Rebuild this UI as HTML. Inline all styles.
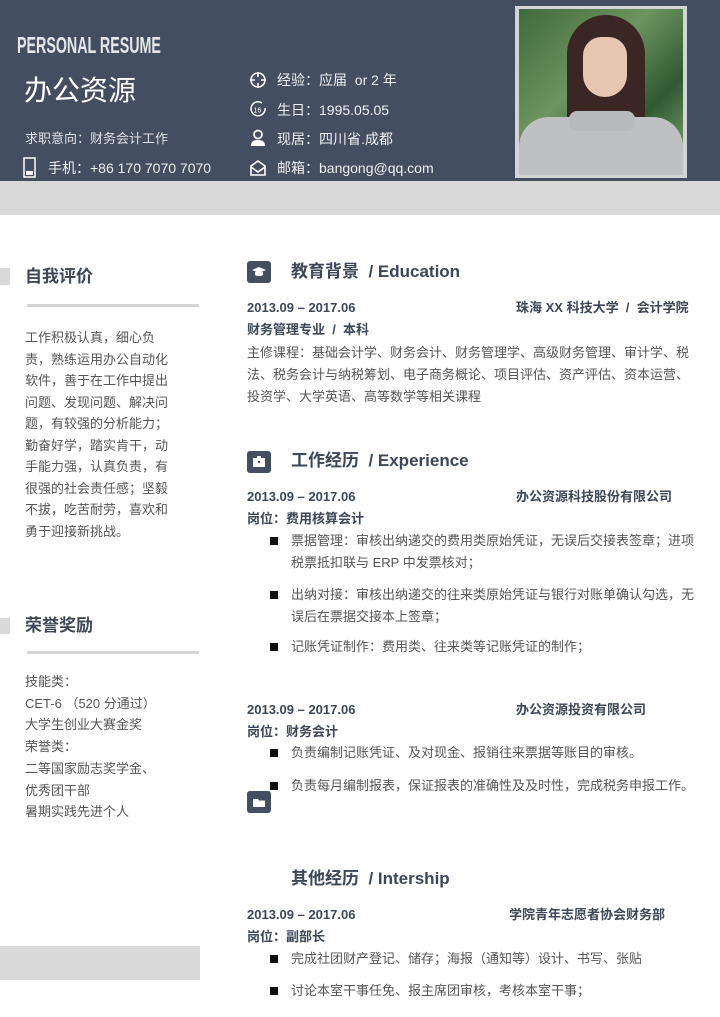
<!DOCTYPE html>
<html><head><meta charset="utf-8">
<style>
*{margin:0;padding:0;box-sizing:border-box}
body{width:720px;height:1017px;position:relative;overflow:hidden;background:#fff;font-family:"Liberation Sans","Noto Sans CJK SC",sans-serif;color:#555}
.a{position:absolute;white-space:nowrap;line-height:1}
.w{color:#eef0f3}
.h{font-size:17px;font-weight:bold;color:#3d4757}
.d{font-size:13px;font-weight:bold;color:#3d4757}
.t{font-size:13px;color:#555}
.ic{position:absolute;width:24px;height:22px;background:#434f60;border-radius:3px}
.b{position:absolute;width:8px;height:8px;background:#111}
</style></head><body>
<div class="a" style="left:0;top:0;width:720px;height:181px;background:#434f60"></div>
<div class="a" style="left:0;top:181px;width:720px;height:34px;background:#d9d9d9"></div>
<div class="a w" style="left:17px;top:34px;font-family:'Liberation Sans Narrow','Liberation Sans',sans-serif;font-weight:bold;font-size:23px;transform:scaleX(0.62);transform-origin:left;color:#e4e6ea">PERSONAL RESUME</div>
<div class="a w" style="left:24px;top:77px;font-size:28px;color:#fff">办公资源</div>
<div class="a w" style="left:25px;top:132px;font-size:13px;color:#dfe2e6">求职意向：财务会计工作</div>
<svg class="a" style="left:23px;top:157px" width="14" height="21" viewBox="0 0 14 21"><rect x="1" y="1" width="11" height="19" fill="none" stroke="#fff" stroke-width="1.5"/><rect x="3" y="14" width="7" height="4" fill="#fff"/></svg>
<div class="a w" style="left:48px;top:161px;font-size:14px">手机：+86 170 7070 7070</div>
<svg class="a" style="left:249px;top:71px" width="18" height="18" viewBox="0 0 18 18" fill="none" stroke="#fff" stroke-width="1.6"><circle cx="9" cy="9" r="7"/><path d="M9 1v5M9 12v5M1 9h5M12 9h5"/></svg>
<svg class="a" style="left:249px;top:100px" width="18" height="18" viewBox="0 0 18 18" fill="none" stroke="#fff" stroke-width="1.5"><path d="M13 3A7 7 0 1 0 16 8"/><text x="4.5" y="12.5" font-size="7" fill="#fff" stroke="none" font-family="Liberation Sans">16</text></svg>
<svg class="a" style="left:249px;top:129px" width="18" height="18" viewBox="0 0 18 18" fill="#fff"><circle cx="9" cy="5.5" r="4" fill="none" stroke="#fff" stroke-width="1.8"/><path d="M2 17c0-5 3-6 7-6s7 1 7 6z"/></svg>
<svg class="a" style="left:249px;top:159px" width="18" height="18" viewBox="0 0 18 18" fill="none" stroke="#fff" stroke-width="1.6"><path d="M2 7l7-5 7 5v9H2z"/><path d="M2 8l7 5 7-5"/></svg>
<div class="a w" style="left:277px;top:73px;font-size:14px">经验：应届&nbsp; or 2 年</div>
<div class="a w" style="left:277px;top:103px;font-size:14px">生日：1995.05.05</div>
<div class="a w" style="left:277px;top:132px;font-size:14px">现居：四川省.成都</div>
<div class="a w" style="left:277px;top:161px;font-size:14px">邮箱：bangong@qq.com</div>
<div class="a" style="left:515px;top:6px;width:172px;height:172px;background:#d3d4d6"></div>
<div class="a" style="left:519px;top:9px;width:164px;height:166px;background:linear-gradient(135deg,#3f6a3a,#6d9460 40%,#2f5a30 70%,#88a878);overflow:hidden">
<div style="position:absolute;left:48px;top:6px;width:78px;height:120px;background:#3a2622;border-radius:40px 40px 10px 10px"></div>
<div style="position:absolute;left:64px;top:28px;width:44px;height:60px;background:#e7c6b3;border-radius:20px 20px 24px 24px"></div>
<div style="position:absolute;left:0;top:108px;width:164px;height:60px;background:#bfc0c2;border-radius:30px 30px 0 0"></div>
<div style="position:absolute;left:50px;top:102px;width:66px;height:20px;background:#b8b9bb;border-radius:8px"></div>
</div>

<div class="a" style="left:0;top:268px;width:10px;height:17px;background:#d9d9d9"></div>
<div class="a h" style="left:25px;top:268px">自我评价</div>
<div class="a" style="left:27px;top:304px;width:172px;height:3px;background:#d5d5d5"></div>
<div class="a t" style="left:25px;top:327px;line-height:21.5px;white-space:pre">工作积极认真，细心负
责，熟练运用办公自动化
软件，善于在工作中提出
问题、发现问题、解决问
题，有较强的分析能力；
勤奋好学，踏实肯干，动
手能力强，认真负责，有
很强的社会责任感；坚毅
不拔，吃苦耐劳，喜欢和
勇于迎接新挑战。</div>

<div class="a" style="left:0;top:618px;width:10px;height:16px;background:#d9d9d9"></div>
<div class="a h" style="left:25px;top:617px">荣誉奖励</div>
<div class="a" style="left:27px;top:651px;width:172px;height:3px;background:#d5d5d5"></div>
<div class="a t" style="left:25px;top:671px;line-height:21.7px;white-space:pre">技能类：
CET-6 （520 分通过）
大学生创业大赛金奖
荣誉类：
二等国家励志奖学金、
优秀团干部
暑期实践先进个人</div>
<div class="a" style="left:0;top:946px;width:200px;height:34px;background:#d9d9d9"></div>

<div class="ic" style="left:247px;top:261px"><svg width="24" height="22" viewBox="0 0 24 22"><path d="M5 9l7-3 7 3-7 3z" fill="#fff"/><path d="M8 11v3c2 1.5 6 1.5 8 0v-3" fill="#fff"/></svg></div>
<div class="a h" style="left:291px;top:263px">教育背景&nbsp; / Education</div>
<div class="a d" style="left:247px;top:301px">2013.09 – 2017.06</div>
<div class="a d" style="left:516px;top:301px">珠海 XX 科技大学&nbsp; /&nbsp; 会计学院</div>
<div class="a d" style="left:247px;top:323px">财务管理专业&nbsp; /&nbsp; 本科</div>
<div class="a t" style="left:247px;top:342px;width:452px;white-space:normal;line-height:22px">主修课程：基础会计学、财务会计、财务管理学、高级财务管理、审计学、税法、税务会计与纳税筹划、电子商务概论、项目评估、资产评估、资本运营、投资学、大学英语、高等数学等相关课程</div>

<div class="ic" style="left:247px;top:451px"><svg width="24" height="22" viewBox="0 0 24 22"><rect x="6" y="7" width="12" height="9" fill="#fff"/><rect x="10" y="5" width="4" height="2" fill="#fff"/><rect x="11" y="10" width="2" height="2" fill="#434f60"/></svg></div>
<div class="a h" style="left:291px;top:452px">工作经历&nbsp; / Experience</div>
<div class="a d" style="left:247px;top:490px">2013.09 – 2017.06</div>
<div class="a d" style="left:516px;top:490px">办公资源科技股份有限公司</div>
<div class="a d" style="left:247px;top:512px">岗位：费用核算会计</div>
<div class="b" style="left:270px;top:537px"></div>
<div class="a t" style="left:291px;top:530px;width:406px;white-space:normal;line-height:22px">票据管理：审核出纳递交的费用类原始凭证，无误后交接表签章；进项税票抵扣联与 ERP 中发票核对；</div>
<div class="b" style="left:270px;top:591px"></div>
<div class="a t" style="left:291px;top:584px;width:406px;white-space:normal;line-height:22px">出纳对接：审核出纳递交的往来类原始凭证与银行对账单确认勾选，无误后在票据交接本上签章；</div>
<div class="b" style="left:270px;top:643px"></div>
<div class="a t" style="left:291px;top:640px">记账凭证制作：费用类、往来类等记账凭证的制作；</div>

<div class="a d" style="left:247px;top:703px">2013.09 – 2017.06</div>
<div class="a d" style="left:516px;top:703px">办公资源投资有限公司</div>
<div class="a d" style="left:247px;top:725px">岗位：财务会计</div>
<div class="b" style="left:270px;top:749px"></div>
<div class="a t" style="left:291px;top:746px">负责编制记账凭证、及对现金、报销往来票据等账目的审核。</div>
<div class="b" style="left:270px;top:782px"></div>
<div class="a t" style="left:291px;top:779px">负责每月编制报表，保证报表的准确性及及时性，完成税务申报工作。</div>
<div class="ic" style="left:247px;top:791px"><svg width="24" height="22" viewBox="0 0 24 22"><path d="M6 8h5l1 1.5h6V16H6z" fill="#fff"/></svg></div>

<div class="a h" style="left:291px;top:870px">其他经历&nbsp; / Intership</div>
<div class="a d" style="left:247px;top:908px">2013.09 – 2017.06</div>
<div class="a d" style="left:509px;top:908px">学院青年志愿者协会财务部</div>
<div class="a d" style="left:247px;top:930px">岗位：副部长</div>
<div class="b" style="left:270px;top:955px"></div>
<div class="a t" style="left:291px;top:952px">完成社团财产登记、储存；海报（通知等）设计、书写、张贴</div>
<div class="b" style="left:270px;top:987px"></div>
<div class="a t" style="left:291px;top:984px">讨论本室干事任免、报主席团审核，考核本室干事；</div>
</body></html>
